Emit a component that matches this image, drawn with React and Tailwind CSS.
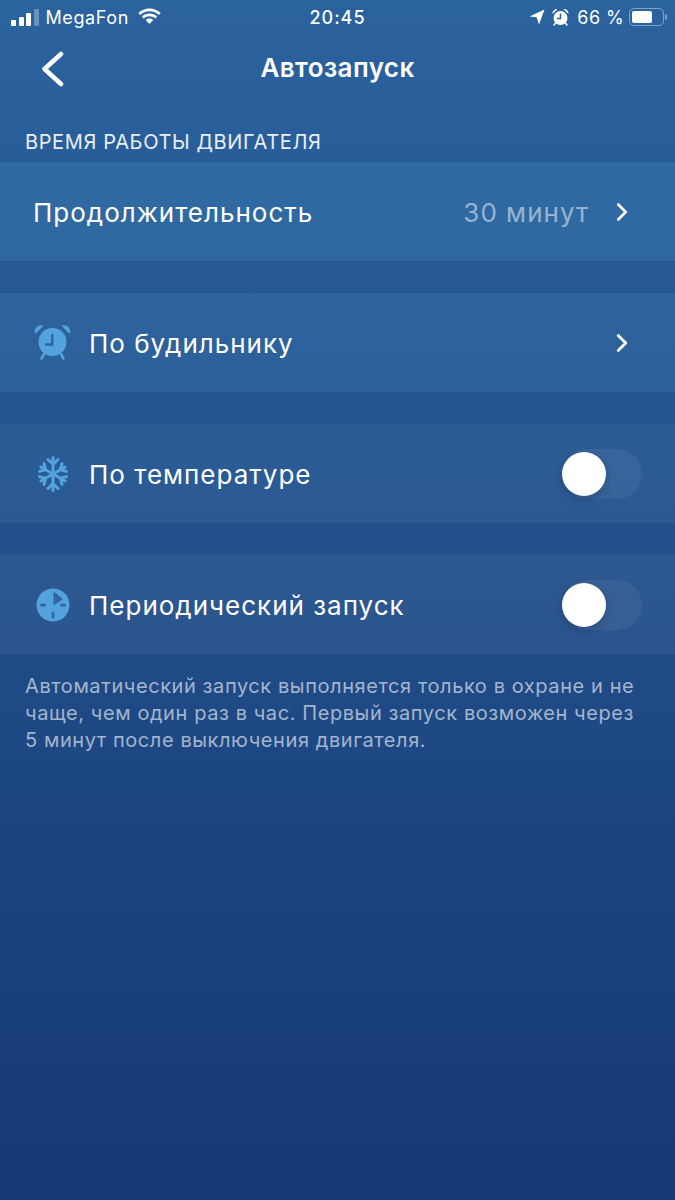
import { ChevronRight } from "lucide-react";

const font = { fontFamily: "Inter, sans-serif" };

function StatusBar() {
  return (
    <div className="flex h-[34px] items-center justify-between pl-[11px] pr-[8px] text-white">
      <div className="flex flex-1 items-center">
        <div className="flex items-end gap-[2.5px]">
          <div className="h-[6px] w-[5px] rounded-[1px] bg-white"></div>
          <div className="h-[9px] w-[5px] rounded-[1px] bg-white"></div>
          <div className="h-[13px] w-[5px] rounded-[1px] bg-white"></div>
          <div className="h-[17px] w-[5px] rounded-[1px] bg-white/30"></div>
        </div>
        <span className="ml-[7px] text-[18px] tracking-[0.6px]">MegaFon</span>
        <svg className="ml-[8px]" width="25" height="18" viewBox="0 0 25 18" fill="white">
          <path d="M12.5 3.2c3.6 0 6.9 1.4 9.4 3.7l1.8-2C20.700 2.100 16.800.5 12.500.5S4.300 2.100 1.300 4.900l1.800 2c2.500-2.300 5.800-3.700 9.400-3.700z" />
          <path d="M12.500 8.200c2.200 0 4.200.8 5.800 2.200l1.900-2c-2.100-1.900-4.800-3-7.700-3s-5.600 1.100-7.700 3l1.900 2c1.600-1.400 3.600-2.200 5.800-2.200z" />
          <path d="M12.500 10.500c-1.400 0-2.700.5-3.700 1.400l3.700 4.100 3.700-4.100c-1-.9-2.300-1.400-3.700-1.400z" />
        </svg>
      </div>
      <span className="mr-[3px] text-[18px] font-medium tracking-[1px]">20:45</span>
      <div className="flex flex-1 items-center justify-end">
        <svg width="16" height="16" viewBox="0 0 16 16" fill="white">
          <path d="M15.500.5 10 15.500 7.700 8.300.5 7.500z" />
        </svg>
        <svg className="ml-[7px]" width="17" height="18" viewBox="0 0 17 18">
          <circle cx="8.500" cy="10" r="7" fill="white" />
          <path d="M.5 6C.3 3 2.500.5 5.500 1zM16.500 6c.2-3-2-5.500-5-5z" fill="white" />
          <path d="M2 17 3.500 15M15 17l-1.500-2" stroke="white" strokeWidth="1.500" strokeLinecap="round" />
          <path d="M8.500 5.500V10.500H5" fill="none" stroke="#2b639f" strokeWidth="1.500" />
        </svg>
        <span className="ml-[8px] text-[18px] tracking-[0.4px]">66 %</span>
        <div className="ml-[5px] flex h-[18px] w-[35px] items-center rounded-[5px] border border-white/40 p-[2px]">
          <div className="h-full w-[20px] rounded-[2px] bg-white"></div>
        </div>
        <div className="ml-[1px] h-[6px] w-[2px] rounded-r-[2px] bg-white/40"></div>
      </div>
    </div>
  );
}

function AlarmIcon() {
  return (
    <svg width="37" height="37" viewBox="0 0 37 37" fill="#52a3de">
      <circle cx="18.500" cy="18" r="14" />
      <path d="M.8 8.500C.2 4 4 .3 8.500 1.300c.6.200.7.800.3 1.200L2.500 8.800C1.900 9.300 1 9.200.8 8.500zM36.200 8.500c.6-4.500-3.200-8.200-7.700-7.200-.6.200-.7.800-.3 1.200l6.300 6.300c.6.500 1.500.400 1.700-.3z" />
      <path d="M10 30 7.500 34.500M27 30l2.500 4.500" stroke="#52a3de" strokeWidth="2.600" strokeLinecap="round" />
      <path d="M18.300 10V20.500H11" fill="none" stroke="#31669f" strokeWidth="2.500" />
    </svg>
  );
}

function SnowIcon() {
  const stem = "M18 18V1.500M18 8.500 13 3.500M18 8.500 23 3.500M18 18V34.500M18 27.500 13 32.500M18 27.500 23 32.500";
  const diagonal = "M18 18V4M18 9.500 13.500 5M18 9.500 22.500 5M18 18V32M18 26.500 13.500 31M18 26.500 22.500 31";
  return (
    <svg width="36" height="36" viewBox="0 0 36 36" fill="none" stroke="#52a3de" strokeWidth="3" strokeLinecap="round">
      <path d={stem} />
      <path d={diagonal} transform="rotate(60 18 18)" />
      <path d={diagonal} transform="rotate(120 18 18)" />
    </svg>
  );
}

function PeriodIcon() {
  return (
    <svg width="34" height="34" viewBox="0 0 34 34">
      <circle cx="17" cy="17" r="16.500" fill="#52a3de" />
      <path d="M17.500 3.500 27 11 17.500 17.500z" fill="#31669f" />
      <rect x="4" y="15.800" width="6" height="2.600" rx="1.300" fill="#31669f" />
      <rect x="24" y="15.800" width="6" height="2.600" rx="1.300" fill="#31669f" />
      <rect x="15.700" y="23.500" width="2.600" height="7" rx="1.300" fill="#31669f" />
    </svg>
  );
}

function Toggle() {
  return (
    <div className="relative h-[50px] w-[80px] rounded-full bg-white/[0.06]">
      <div className="absolute left-0 top-[3px] h-[44px] w-[44px] rounded-full bg-white shadow-[0_3px_8px_rgba(0,0,0,0.2)]"></div>
    </div>
  );
}

function Chevron() {
  return <ChevronRight className="mr-[5px]" size={30} strokeWidth={2.200} color="white" />;
}

function Row({ icon, label, right, tint }) {
  return (
    <div className={"flex h-[101px] items-center justify-between border-y border-[#235089]/70 px-[33px] " + tint}>
      <div className="flex items-center">
        {icon && <div className="mr-[17px] flex w-[39px] justify-center">{icon}</div>}
        <span className="pt-[1px] text-[26px] tracking-[1px] text-white">{label}</span>
      </div>
      {right}
    </div>
  );
}

export default function App() {
  return (
    <div
      className="h-[1200px] w-[675px] overflow-hidden bg-gradient-to-b from-[#2b639f] to-[#163873]"
      style={font}
    >
      <StatusBar />
      <div className="relative flex h-[68px] items-center justify-center">
        <svg className="absolute left-[40px] top-[17px]" width="24" height="36" viewBox="0 0 24 36" fill="none" stroke="white" strokeWidth="4.500" strokeLinecap="round" strokeLinejoin="round">
          <path d="M21 3 4.500 18 21 33" />
        </svg>
        <span className="pb-[2px] text-[26px] font-semibold tracking-[0.4px] text-white">Автозапуск</span>
      </div>
      <div className="pl-[25px] pt-[27px] pb-[6px] text-[20px] leading-[26px] tracking-[0.63px] text-white/90">ВРЕМЯ РАБОТЫ ДВИГАТЕЛЯ</div>
      <div className="flex flex-col gap-[30px]">
        <Row
          tint="bg-[#78d8ff]/[0.11]"
          label="Продолжительность"
          right={
            <div className="flex items-center">
              <span className="mr-[18px] pt-[1px] text-[26px] tracking-[1px] text-white/50">30 минут</span>
              <Chevron />
            </div>
          }
        />
        <Row tint="bg-[#78c8f0]/[0.1]" icon={<AlarmIcon />} label="По будильнику" right={<Chevron />} />
        <Row tint="bg-[#90c0e0]/[0.09]" icon={<SnowIcon />} label="По температуре" right={<Toggle />} />
        <Row tint="bg-white/[0.055]" icon={<PeriodIcon />} label="Периодический запуск" right={<Toggle />} />
      </div>
      <p className="px-[25px] pt-[18px] text-[20px] leading-[27px] tracking-[0.58px] text-white/60">
        Автоматический запуск выполняется только в охране и не чаще, чем один раз в час. Первый запуск возможен через 5 минут после выключения двигателя.
      </p>
    </div>
  );
}
